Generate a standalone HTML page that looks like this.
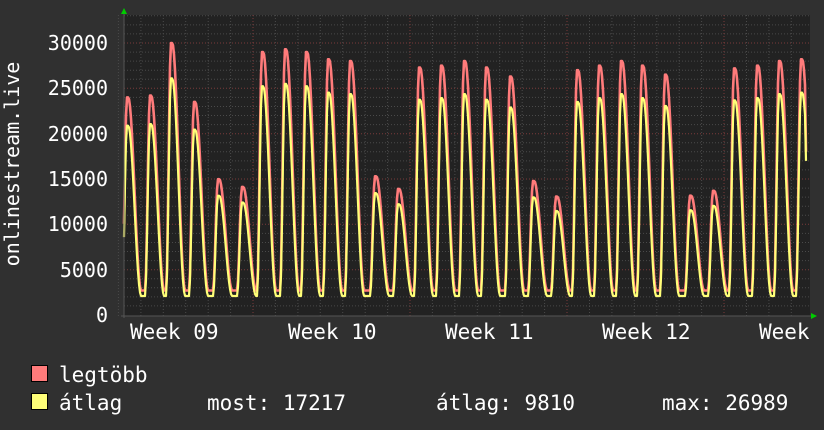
<!DOCTYPE html>
<html><head><meta charset="utf-8"><style>
html,body{margin:0;padding:0;background:#303030;width:824px;height:430px;overflow:hidden}
svg{display:block}
text{font-family:"DejaVu Sans Mono","Liberation Mono",monospace;fill:#fff}
</style></head><body>
<svg id="s" width="824" height="430" xmlns="http://www.w3.org/2000/svg">
<rect x="0" y="0" width="824" height="430" fill="#303030"/>
<rect x="124" y="15" width="686" height="301" fill="#222222"/>
<g id="grid"></g>
<path id="red" fill="none" stroke="#ff7b7b" stroke-width="2.6" stroke-linejoin="round"/>
<path id="yel" fill="none" stroke="#ffff78" stroke-width="2.2" stroke-linejoin="round"/>
<line x1="124" y1="12" x2="124" y2="318" stroke="#555" stroke-width="1"/>
<line x1="121" y1="316" x2="812" y2="316" stroke="#555" stroke-width="1"/>
<polygon points="121,14 127,14 124,8" fill="#00cc00"/>
<polygon points="811,313 811,319 817,316" fill="#00cc00"/>
<g font-size="20" text-anchor="end">
<text x="108" y="50">30000</text>
<text x="108" y="95">25000</text>
<text x="108" y="141">20000</text>
<text x="108" y="186">15000</text>
<text x="108" y="231">10000</text>
<text x="108" y="277">5000</text>
<text x="108" y="322">0</text>
</g>
<text transform="translate(19,164) rotate(-90)" font-size="20" text-anchor="middle">onlinestream.live</text>
<g font-size="21">
<text x="130" y="339">Week 09</text>
<text x="288" y="339">Week 10</text>
<text x="445" y="339">Week 11</text>
<text x="602" y="339">Week 12</text>
<text x="759" y="339">Week</text>
<text x="59" y="382">legtöbb</text>
<text x="59" y="410">átlag</text>
<text x="207" y="410">most: 17217</text>
<text x="436" y="410">átlag: 9810</text>
<text x="662" y="410">max: 26989</text>
</g>
<rect x="31.5" y="365.5" width="16" height="16" fill="#ff7b7b" stroke="#000"/>
<rect x="31.5" y="393.5" width="16" height="16" fill="#ffff78" stroke="#000"/>
</svg>
<script>
(function(){
var Y=function(v){return 315-v*272/30000;};
var g='';
for(var v=1000;v<=33000;v+=1000){var y=Y(v);if(y<15)break;
 var maj=(v%5000==0);
 g+='<line x1="124" x2="810" y1="'+y.toFixed(1)+'" y2="'+y.toFixed(1)+'" stroke="'+(maj?'#7a3a3a':'#4a4a4a')+'" stroke-dasharray="1,2"/>';}
for(var i=1;;i++){var x=96+22.43*i;if(x>810)break;var wk=(i%7==0);
 g+='<line y1="15" y2="316" x1="'+x.toFixed(1)+'" x2="'+x.toFixed(1)+'" stroke="'+(wk?'#7a3a3a':'#4a4a4a')+'" stroke-dasharray="1,2"/>';}
document.getElementById('grid').innerHTML=g;
var pk=[[105,14000],[127,24000],[150,24200],[171,30000],[194,23500],[218,14000],[242,13200],[262,29000],[285,29300],[306,29000],[328,28200],[350,28000],[375,14300],[398,13000],[419,27300],[441,27500],[464,28000],[486,27300],[510,26300],[533,13800],[556,12200],[577,27000],[599,27500],[621,28000],[642,27500],[665,26500],[690,12300],[713,12800],[734,27200],[757,27500],[779,28000],[801,28200],[830,28000]];
function val(x,rat,mn){
 for(var i=0;i<pk.length-1;i++){if(x>=pk[i][0]&&x<pk[i+1][0])break;}
 var a=pk[i],b=pk[i+1],d=b[0]-a[0],t=x-a[0];
 var pa=a[1]*(a[1]>20000?rat:rat+0.07),pb=b[1]*(b[1]>20000?rat:rat+0.07);
 var R=5,D=13;
 if(t>d-R){var f=(t-(d-R))/R;return mn+(pb-mn)*(0.5-0.5*Math.cos(Math.PI*f));}
 if(t<1.2)return pa;
 if(t<1.2+D){var f=(t-1.2)/D;return mn+(pa-mn)*(0.5+0.5*Math.cos(Math.PI*f));}
 return mn;
}
var r='',y='';
for(var x=124;x<=806;x+=1){
 var vr=val(x,1,2700),vy=val(x,0.87,2100);
 if(x==806){vr=18000;vy=17000;}
 r+=(x==124?'M':'L')+x+','+Y(vr).toFixed(1);
 y+=(x==124?'M':'L')+x+','+Y(vy).toFixed(1);
}
document.getElementById('red').setAttribute('d',r);
document.getElementById('yel').setAttribute('d',y);
})();
</script>
</body></html>
